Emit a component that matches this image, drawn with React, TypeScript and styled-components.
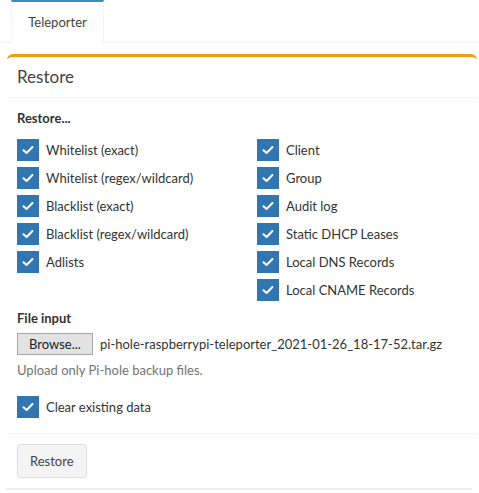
import React from 'react';
import styled, { createGlobalStyle } from 'styled-components';

const GlobalStyle = createGlobalStyle`
  body {
    margin: 0;
    background: #fff;
    font-family: Lato, "Liberation Sans", sans-serif;
    font-size: 13px;
    color: #333;
  }
`;

const Page = styled.div`
  width: 479px;
`;

const TabBar = styled.div`
  display: flex;
  padding-left: 11px;
  border-bottom: 1px solid #f4f4f4;
  height: 42px;
`;

const Tab = styled.div`
  width: 93px;
  box-sizing: border-box;
  height: 44px;
  border-top: 2px solid #3c8dbc;
  border-left: 1px solid #f4f4f4;
  border-right: 1px solid #f4f4f4;
  background: #fff;
  color: #444;
  display: flex;
  align-items: center;
  justify-content: center;
  padding-bottom: 2px;
`;

const Box = styled.div`
  margin: 11px 2px 0 7px;
  border-top: 3px solid #f39c12;
  border-radius: 6px 6px 0 0;
`;

const BoxHeader = styled.div`
  padding: 6px 10px 7px;
  font-size: 17px;
  line-height: 27px;
  border-bottom: 1px solid #f4f4f4;
  color: #444;
`;

const BoxBody = styled.div`
  padding: 10px 10px 12px;
`;

const Heading = styled.div<{ $gap: number }>`
  font-weight: 700;
  line-height: 20px;
  margin-bottom: ${p => p.$gap}px;
`;

const Columns = styled.div`
  display: grid;
  grid-template-columns: 240px 1fr;
`;

const Column = styled.div`
  display: flex;
  flex-direction: column;
`;

const CheckRow = styled.label`
  display: flex;
  align-items: center;
  height: 28px;
  gap: 7px;
`;

const CheckBox = styled.span`
  width: 22px;
  height: 22px;
  background: #3276b1;
  display: flex;
  align-items: center;
  justify-content: center;
  flex-shrink: 0;
`;

const Section = styled.div<{ $top: number }>`
  margin-top: ${p => p.$top}px;
`;

const FileRow = styled.div`
  display: flex;
  align-items: center;
  gap: 7px;
  white-space: nowrap;
`;

const BrowseButton = styled.button`
  font-family: inherit;
  font-size: 13px;
  color: #222;
  background: #e2e2e2;
  border: 1px solid #a8a8a8;
  height: 22px;
  width: 76px;
  padding: 0;
`;

const Help = styled.div`
  color: #737373;
  margin-top: 5px;
  line-height: 20px;
`;

const BoxFooter = styled.div`
  border-top: 1px solid #f4f4f4;
  padding: 10px;
`;

const Button = styled.button`
  font-family: inherit;
  font-size: 13px;
  color: #444;
  background: #f4f4f4;
  border: 1px solid #ddd;
  border-radius: 3px;
  height: 34px;
  padding: 0 12px;
`;

const BottomLine = styled.div`
  margin: 0 7px 0 6px;
  border-top: 2px solid #eee;
`;

const Check = () => (
  <svg width="12" height="10" viewBox="0 0 12 10">
    <path d="M1.5 5.2 L4.6 8 L10.5 2" fill="none" stroke="#fff" strokeWidth="2" strokeLinecap="round" strokeLinejoin="round" />
  </svg>
);

const Item: React.FC<{ label: string }> = ({ label }) => (
  <CheckRow>
    <CheckBox><Check /></CheckBox>
    {label}
  </CheckRow>
);

const left = ['Whitelist (exact)', 'Whitelist (regex/wildcard)', 'Blacklist (exact)', 'Blacklist (regex/wildcard)', 'Adlists'];
const right = ['Client', 'Group', 'Audit log', 'Static DHCP Leases', 'Local DNS Records', 'Local CNAME Records'];

export default function App() {
  return (
    <Page>
      <GlobalStyle />
      <TabBar>
        <Tab>Teleporter</Tab>
      </TabBar>
      <Box>
        <BoxHeader>Restore</BoxHeader>
        <BoxBody>
          <Heading $gap={8}>Restore...</Heading>
          <Columns>
            <Column>{left.map(l => <Item key={l} label={l} />)}</Column>
            <Column>{right.map(l => <Item key={l} label={l} />)}</Column>
          </Columns>
          <Section $top={4}>
            <Heading $gap={5}>File input</Heading>
            <FileRow>
              <BrowseButton>Browse...</BrowseButton>
              <span>pi-hole-raspberrypi-teleporter_2021-01-26_18-17-52.tar.gz</span>
            </FileRow>
            <Help>Upload only Pi-hole backup files.</Help>
          </Section>
          <Section $top={13}>
            <Item label="Clear existing data" />
          </Section>
        </BoxBody>
        <BoxFooter>
          <Button>Restore</Button>
        </BoxFooter>
      </Box>
      <BottomLine />
    </Page>
  );
}
